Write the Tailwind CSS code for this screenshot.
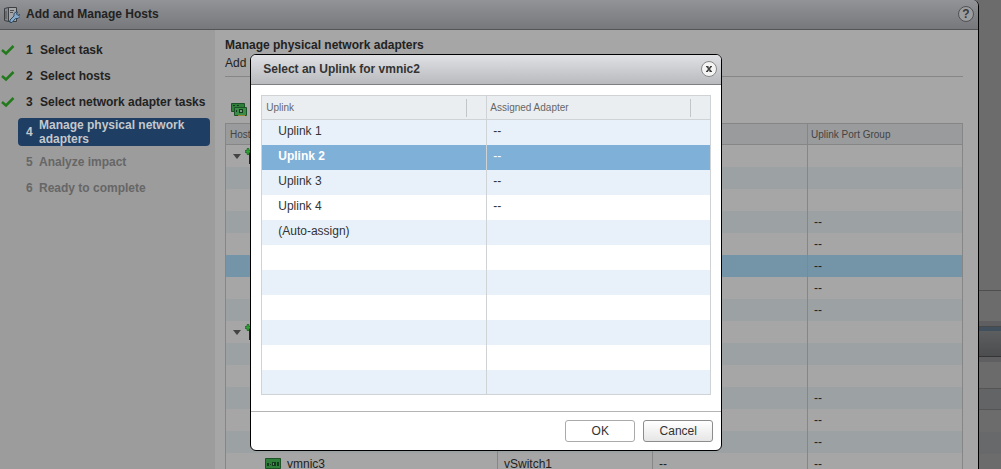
<!DOCTYPE html>
<html lang="en">
<head>
  <meta charset="UTF-8" />
  <meta name="viewport" content="width=device-width, initial-scale=1.0" />
  <title>Add and Manage Hosts</title>
  <script src="https://cdn.jsdelivr.net/npm/@tailwindcss/browser@4"></script>
</head>
<body class="h-screen overflow-hidden bg-[#6c6c6c] font-['Liberation_Sans',Arial,sans-serif] text-xs text-[#222]">

  <svg class="hidden">
    <symbol id="check" viewBox="0 0 14 12">
      <path d="M1 6 L5 9.5 L12.500 2" fill="none" stroke="#237a1d" stroke-width="2.5" />
    </symbol>
    <symbol id="nic" viewBox="0 0 16 12">
      <path d="M.5 .5h15v10h-15z" fill="#2f7f3b" stroke="#1c5227" />
      <path d="M2 5h2v3H2zM5 6h1v1H5zM7 4h4v4H7zM12 4h2v4h-2z" fill="#163a1e" />
      <path d="M8 5h1v2H8z" fill="#6d8a73" />
      <path d="M5 10h6v2H5z" fill="#1c5227" />
    </symbol>
    <symbol id="host" viewBox="0 0 16 16">
      <path d="M4 5h10v11H4z" fill="#222" />
      <path d="M2 .5h2v2h2v2H4v2H2v-2H0v-2h2z" fill="#2fa336" stroke="#14651b" stroke-width=".7" />
    </symbol>
  </svg>

  <div class="flex h-full">
    <!-- Wizard -->
    <div class="flex min-w-0 flex-1 flex-col rounded-tr-md border-r border-black bg-[#a6a6a6]">
      <header class="flex h-[30px] shrink-0 items-center rounded-tr-md border-b border-[#545557] bg-linear-to-b from-[#929397] to-[#77787b] pr-1 pl-1">
        <svg class="h-4 w-4" viewBox="0 0 16 16">
          <path d="M.5 1.500l4-1v14l-4-1z" fill="#85878a" stroke="#3b3e42" />
          <path d="M4.500 .5h8v14h-8z" fill="#a4a6a8" stroke="#3b3e42" />
          <path d="M2 4v8M6 3.500h4M6 5.500h3M6 12.500h1" fill="none" stroke="#4e5154" />
          <path d="M6 15.500v-2.500l4-4V6.500L12 5h1.500l-1 2 1.500 1.500 2-1v2L14 11.500h-2.500l-3.500 4z" fill="#86a9c8" stroke="#27435e" stroke-width=".9" />
        </svg>
        <h1 class="ml-1.5 flex-1 pb-0.5 font-bold">Add and Manage Hosts</h1>
        <button aria-label="Help" class="mb-0.5 h-4 w-4 rounded-full border border-[#505154] bg-[#9c9d9f] text-xs leading-[14px] font-bold text-[#3a3a3a]">?</button>
      </header>

      <div class="flex min-h-0 flex-1">
        <!-- Steps -->
        <nav class="w-[215px] shrink-0 bg-[#9c9c9c] pt-[7px] font-bold">
          <ol>
            <li class="flex h-[26px] items-center"><svg class="mr-[11px] ml-px h-3 w-3.5"><use href="#check" /></svg><span class="w-3.5">1</span>Select task</li>
            <li class="flex h-[26px] items-center"><svg class="mr-[11px] ml-px h-3 w-3.5"><use href="#check" /></svg><span class="w-3.5">2</span>Select hosts</li>
            <li class="flex h-[26px] items-center"><svg class="mr-[11px] ml-px h-3 w-3.5"><use href="#check" /></svg><span class="w-3.5">3</span>Select network adapter tasks</li>
            <li class="my-[3px] mr-[5px] ml-[18px] flex h-7 items-center rounded bg-[#1e3e63] pl-2 leading-[14px] text-[#c4c8cc]"><span class="w-[13px] shrink-0">4</span>Manage physical network adapters</li>
            <li class="flex h-[26px] items-center pl-[26px] text-[#666]"><span class="w-[13px]">5</span>Analyze impact</li>
            <li class="flex h-[26px] items-center pl-[26px] text-[#666]"><span class="w-[13px]">6</span>Ready to complete</li>
          </ol>
        </nav>

        <main class="min-w-0 flex-1 pt-1.5 pr-[15px] pl-2.5">
          <h2 class="leading-[18px] font-bold">Manage physical network adapters</h2>
          <p class="h-[23px] border-b border-[#868686] leading-[18px]">Add</p>
          <div class="flex h-[46px] items-end pb-[5px] pl-1.5">
            <svg class="h-4 w-4" viewBox="0 0 16 16">
              <path d="M.5 1.500h13v8H.5z" fill="#2f7f3b" stroke="#1c5227" />
              <path d="M2 3h2v1H2zM6 3h2v1H6z" fill="#163a1e" />
              <path d="M3.500 5.500h12v8h-12z" fill="#3b8c47" stroke="#1c5227" />
              <path d="M8 7h4v4H8zM5 8h1v2H5z" fill="#163a1e" />
              <path d="M9 8h2v2H9z" fill="#7d9a82" />
              <path d="M7 13h7v1H7z" fill="#988535" />
            </svg>
          </div>
          <table class="w-full table-fixed border-separate border-spacing-0 border border-[#868686]">
            <thead>
              <tr class="h-[21px] bg-[#9a9b9d] text-left text-[10px] text-[#444] *:border-b *:border-[#868686] *:p-0 *:pt-0.5 *:font-normal">
                <th class="w-[272px] border-r"><span class="pl-1">Host</span></th>
                <th class="w-[155px] border-r"></th>
                <th class="w-[155px] border-r"></th>
                <th><span class="pl-[3px]">Uplink Port Group</span></th>
              </tr>
            </thead>
            <tbody id="adapters"></tbody>
          </table>
        </main>
      </div>
    </div>

    <!-- Page behind the wizard -->
    <div class="flex w-[22px] shrink-0 flex-col pt-[290px]">
      <div class="h-[31px] border-t border-[#4f4f4f]"></div>
      <div class="h-[5px] bg-[#5f5f61]"></div>
      <div class="h-[5px] border-t border-[#48494a] bg-[#42505e]"></div>
      <div class="h-[26px] border-b border-[#353535] bg-linear-to-b from-[#5d5e60] to-[#4c4d4f]"></div>
      <div class="h-[5px] bg-[#5f5f62]"></div>
      <div class="h-[27px] border-b border-[#555] bg-[#6b6b6b]"></div>
      <div class="h-[21px] border-b border-[#555] bg-[#636465]"></div>
      <div class="h-[22px]"></div>
      <div class="h-[22px] bg-[#67696b]"></div>
    </div>
  </div>

  <!-- Uplink dialog -->
  <div role="dialog" aria-labelledby="dialogTitle" class="absolute top-[54px] left-1/4 w-[472px] overflow-hidden rounded-md border border-black bg-white text-[#333]">
    <div class="flex h-[30px] items-center border-b border-[#7d7e80] bg-linear-to-b from-[#e0e1e5] to-[#b9babd] pr-1 pl-3">
      <h2 id="dialogTitle" class="flex-1 pb-0.5 font-bold">Select an Uplink for vmnic2</h2>
      <button aria-label="Close" class="mb-0.5 flex h-4 w-4 items-center justify-center rounded-full border border-[#888] bg-[#f4f4f4]">
        <svg class="h-2 w-2" viewBox="0 0 8 8"><path d="M2 1.500l4 5M6 1.500l-4 5" stroke="#444" stroke-width="1.600" /><path d="M1 1.500h2.500M5 1.500h2M1 6.500h2M4.500 6.500H7" stroke="#444" /></svg>
      </button>
    </div>
    <div class="px-2.5 pt-2.5 pb-4">
      <table class="w-full table-fixed border-separate border-spacing-0 border border-[#d0d3d5]">
        <thead>
          <tr class="h-6 bg-[#eaeef1] text-left text-[10px] text-[#666] *:border-b *:border-[#d0d3d5] *:p-0 *:font-normal">
            <th class="w-[225px] border-r"><div class="mr-[19px] h-[18px] border-r border-[#c3c6c8] pl-1 leading-[18px]">Uplink</div></th>
            <th><div class="mr-[19px] h-[18px] border-r border-[#c3c6c8] pl-[3px] leading-[18px]">Assigned Adapter</div></th>
          </tr>
        </thead>
        <tbody id="uplinks"></tbody>
      </table>
    </div>
    <div class="flex h-[39px] justify-end gap-2 border-t border-[#b5b5b5] pt-2 pr-2">
      <button class="h-[22px] w-[70px] rounded-[3px] border border-[#aaa] bg-white">OK</button>
      <button class="h-[22px] w-[70px] rounded-[3px] border border-[#8c8c8c] bg-linear-to-b from-white to-[#e6e6e6]">Cancel</button>
    </div>
  </div>

  <script>
    const icon = (id, cls) => `<svg class="${cls}"><use href="#${id}" /></svg>`;
    const group = `<div class="flex items-center pl-[7px]"><svg class="mr-1 h-[5px] w-2" viewBox="0 0 8 5"><path d="M0 0h8L4 5z" fill="#444" /></svg>${icon("host", "h-4 w-4")}</div>`;
    const nic = name => `<div class="flex items-center pl-[39px]">${icon("nic", "mr-1.5 h-3 w-4")}${name}</div>`;

    const adapters = [
      [group, "", "", ""],
      ["", "", "", ""],
      ["", "", "", ""],
      ["", "", "", "--"],
      ["", "", "", "--"],
      ["", "", "", "--"],
      ["", "", "", "--"],
      ["", "", "", "--"],
      [group, "", "", ""],
      ["", "", "", ""],
      ["", "", "", ""],
      ["", "", "", "--"],
      ["", "", "", "--"],
      ["", "", "", "--"],
      [nic("vmnic3"), "vSwitch1", "--", "--"]
    ];
    document.getElementById("adapters").innerHTML = adapters.map((row, i) => {
      const bg = i === 5 ? "bg-[#7494a8]" : i % 2 ? "bg-[#9ca1a4]" : "";
      return `<tr class="h-[22px] ${bg}">` + row.map((cell, c) =>
        `<td class="p-0 whitespace-nowrap ${c ? "pl-1.5" : ""} ${c < 3 ? "border-r border-[#868686]" : ""}">${cell}</td>`
      ).join("") + "</tr>";
    }).join("");

    const uplinks = [
      ["Uplink 1", "--"], ["Uplink 2", "--"], ["Uplink 3", "--"], ["Uplink 4", "--"], ["(Auto-assign)", ""],
      ["", ""], ["", ""], ["", ""], ["", ""], ["", ""], ["", ""]
    ];
    document.getElementById("uplinks").innerHTML = uplinks.map(([name, adapter], i) => {
      const bg = i === 1 ? "bg-[#7fb0d8] text-white" : i % 2 ? "" : "bg-[#e8f1f9]";
      return `<tr class="h-[25px] last:h-6 ${bg}">
        <td class="border-r border-[#d0d3d5] p-0 pb-1 pl-4 ${i === 1 ? "font-bold" : ""}">${name}</td>
        <td class="p-0 pb-1 pl-1.5">${adapter}</td>
      </tr>`;
    }).join("");
  </script>
</body>
</html>
